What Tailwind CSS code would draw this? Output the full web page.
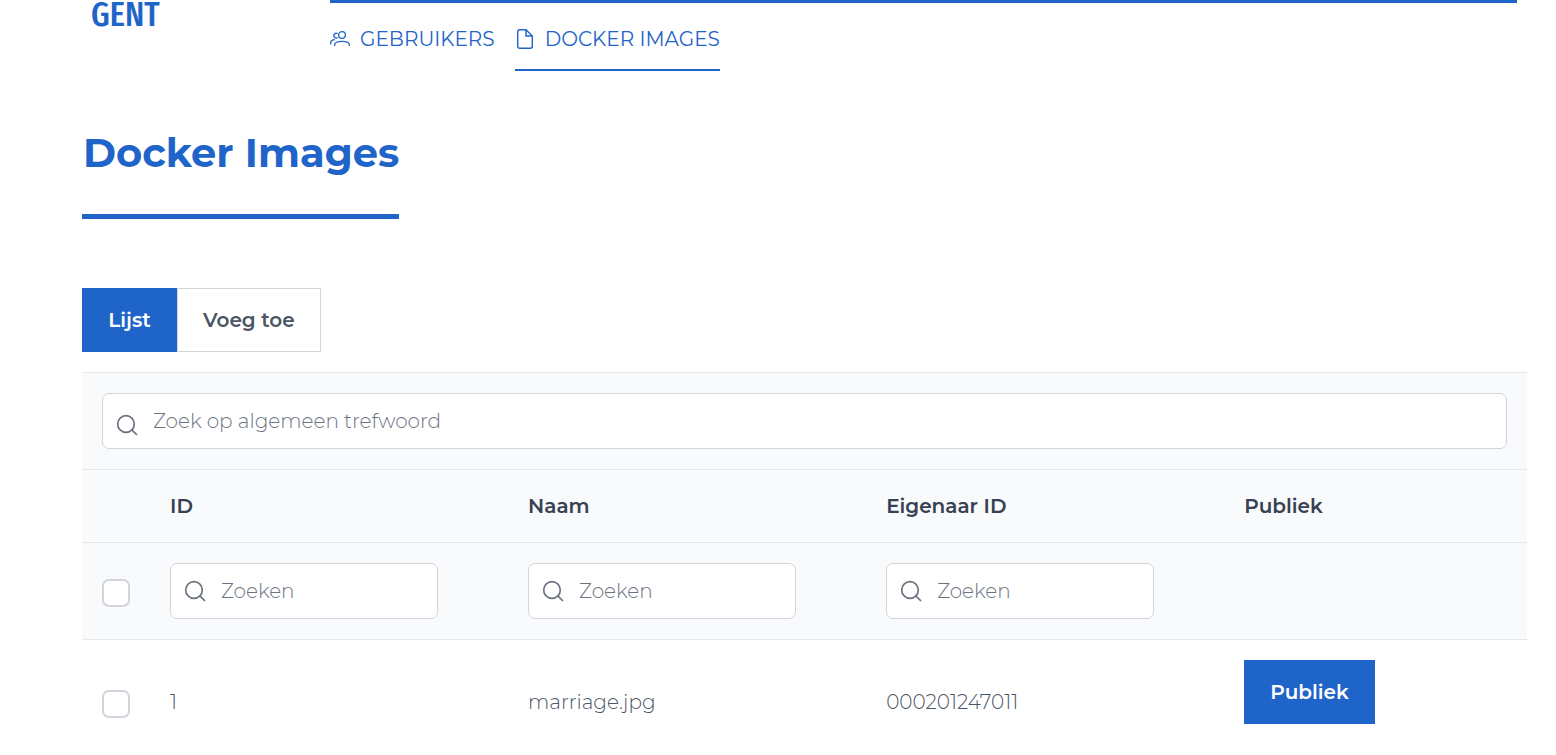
<!DOCTYPE html>
<html lang="nl">
<head>
<meta charset="utf-8">
<meta name="viewport" content="width=device-width, initial-scale=1">
<title>Docker Images</title>
<script src="https://cdn.jsdelivr.net/npm/@tailwindcss/browser@4"></script>
</head>
<body class="overflow-x-hidden bg-white pl-[82px] pr-[29px] font-['Montserrat','Inter',sans-serif] text-[20px] leading-8 font-light text-[#4b5563]">
<svg class="hidden" aria-hidden="true">
  <symbol id="search" viewBox="0 0 22 22"><g fill="none" stroke="currentColor" stroke-width="1.7"><circle cx="10" cy="10" r="8.300"/><path d="M15.800 15.800 21 21"/></g></symbol>
</svg>
<header class="flex items-start pr-[10px]">
  <a href="#" class="w-[248px] shrink-0 pl-[9px] font-['Fira_Sans_Extra_Condensed','Fira_Sans_Condensed','Open_Sans_Condensed','Roboto_Condensed','Liberation_Sans'] text-[35px] leading-7 font-medium text-[#1f64c8]">GENT</a>
  <nav class="flex grow gap-5 border-t-[3px] border-[#1f64c8] font-normal text-[#1f64c8]">
    <a href="#" class="flex items-center gap-[10px] border-b-2 border-transparent pt-5 pb-[14px]">
      <svg class="h-5 w-5" viewBox="0 0 20 20" fill="none" stroke="currentColor" stroke-width="1.3" aria-hidden="true"><circle cx="12" cy="6" r="3.4"/><path d="M4.7 17v-1.200c0-2.200 2.500-3.500 7.300-3.500s7.300 1.300 7.300 3.500V17M7.700 4.700A2.400 2.400 0 1 0 7.700 8.500M.6 15.500v-1.300c0-2 1.600-3.300 4.300-3.500"/></svg>
      GEBRUIKERS
    </a>
    <a href="#" aria-current="page" class="flex items-center gap-[10px] border-b-2 border-[#1f64c8] pt-5 pb-[14px]">
      <svg class="h-5 w-5" viewBox="0 0 20 20" fill="none" stroke="currentColor" stroke-width="1.4" aria-hidden="true"><path d="M11 .7H4.700A2 2 0 0 0 2.700 2.700v14.600a2 2 0 0 0 2 2h10.600a2 2 0 0 0 2-2V7zM11 .7V7h6.300"/></svg>
      DOCKER IMAGES
    </a>
  </nav>
</header>
<main>
  <h1 class="mt-[52px] w-fit border-b-[5px] border-[#1f64c8] pb-[31px] pl-px text-[40px] leading-[60px] font-bold text-[#1f64c8]">Docker Images</h1>
  <div class="mt-[69px] flex leading-8 font-semibold">
    <button type="button" class="min-w-[95px] bg-[#1f64c8] px-[26px] py-4 text-white">Lijst</button>
    <button type="button" class="border border-[#d1d5db] bg-white px-[25px] py-[15px] text-[#4b5563]">Voeg toe</button>
  </div>
  <div class="mt-5 border-t border-[#e5e7eb] bg-[#f9fafc] p-5">
    <div class="relative">
      <svg class="absolute top-[21px] left-[14px] h-[22px] w-[22px] text-[#6b7280]" aria-hidden="true"><use href="#search"/></svg>
      <input type="search" aria-label="Zoek op algemeen trefwoord" placeholder="Zoek op algemeen trefwoord" class="block h-14 w-full rounded-[7px] border border-[#d1d5db] bg-white pr-4 pl-[50px] placeholder:text-[#6b7280]">
    </div>
  </div>
  <table class="w-full table-fixed border-separate border-spacing-0 text-left">
    <colgroup><col class="w-[68px]"><col class="w-[24.78%]"><col class="w-[24.78%]"><col class="w-[24.78%]"><col></colgroup>
    <thead class="bg-[#f9fafc]">
      <tr class="*:border-t *:border-[#e5e7eb] *:px-5 *:py-5 *:font-semibold *:text-[#374151]">
        <td></td><th scope="col">ID</th><th scope="col">Naam</th><th scope="col">Eigenaar ID</th><th scope="col">Publiek</th>
      </tr>
      <tr class="*:border-y *:border-[#e5e7eb] *:px-5 *:py-5">
        <td><input type="checkbox" aria-label="Alles selecteren" class="mt-1 block h-7 w-7 appearance-none rounded-[7px] border-2 border-[#d1d5db] bg-white"></td>
        <td><div class="relative w-[268px]"><svg class="absolute top-[17px] left-[14px] h-[22px] w-[22px] text-[#6b7280]" aria-hidden="true"><use href="#search"/></svg><input type="search" aria-label="Zoeken op ID" placeholder="Zoeken" class="block h-14 w-full rounded-[7px] border border-[#d1d5db] bg-white pr-4 pl-[50px] placeholder:text-[#6b7280]"></div></td>
        <td><div class="relative w-[268px]"><svg class="absolute top-[17px] left-[14px] h-[22px] w-[22px] text-[#6b7280]" aria-hidden="true"><use href="#search"/></svg><input type="search" aria-label="Zoeken op naam" placeholder="Zoeken" class="block h-14 w-full rounded-[7px] border border-[#d1d5db] bg-white pr-4 pl-[50px] placeholder:text-[#6b7280]"></div></td>
        <td><div class="relative w-[268px]"><svg class="absolute top-[17px] left-[14px] h-[22px] w-[22px] text-[#6b7280]" aria-hidden="true"><use href="#search"/></svg><input type="search" aria-label="Zoeken op eigenaar ID" placeholder="Zoeken" class="block h-14 w-full rounded-[7px] border border-[#d1d5db] bg-white pr-4 pl-[50px] placeholder:text-[#6b7280]"></div></td>
        <td></td>
      </tr>
    </thead>
    <tbody>
      <tr class="*:p-5">
        <td><input type="checkbox" aria-label="marriage.jpg selecteren" class="mt-1 block h-7 w-7 appearance-none rounded-[7px] border-2 border-[#d1d5db] bg-white"></td>
        <td>1</td>
        <td>marriage.jpg</td>
        <td>000201247011</td>
        <td><button type="button" class="mb-5 block bg-[#1f64c8] px-[26px] py-4 font-semibold text-white">Publiek</button></td>
      </tr>
    </tbody>
  </table>
</main>
</body>
</html>
